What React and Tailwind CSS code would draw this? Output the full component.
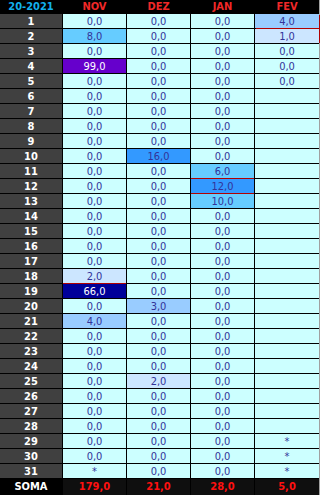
const font = { fontFamily: '"DejaVu Sans Condensed", "DejaVu Sans", Tahoma, sans-serif' };

// bg / text per highlighted cell, keyed "row-col"
const special = {
  "1-3": "bg-[#99ccff]",
  "2-0": "bg-[#66ccff]",
  "2-3": "bg-[#cce6ff]",
  "4-0": "bg-[#6600cc] text-white",
  "10-1": "bg-[#3399ff]",
  "11-2": "bg-[#66ccff]",
  "12-2": "bg-[#3399ff]",
  "13-2": "bg-[#66ccff]",
  "18-0": "bg-[#cce6ff]",
  "19-0": "bg-[#000099] text-white",
  "20-1": "bg-[#99ccff]",
  "21-0": "bg-[#99ccff]",
  "25-1": "bg-[#cce6ff]",
};

// red grid line under / beside some cells
const redLine = {
  "1-3": "shadow-[1px_1px_0_#b00000]",
  "2-3": "shadow-[1px_0_0_#b00000]",
  "11-2": "shadow-[0_1px_0_#b00000]",
  "12-2": "shadow-[0_1px_0_#b00000]",
  "18-0": "shadow-[0_1px_0_#b00000]",
};

const values = {
  "1-3": "4,0",
  "2-0": "8,0",
  "2-3": "1,0",
  "4-0": "99,0",
  "10-1": "16,0",
  "11-2": "6,0",
  "12-2": "12,0",
  "13-2": "10,0",
  "18-0": "2,0",
  "19-0": "66,0",
  "20-1": "3,0",
  "21-0": "4,0",
  "25-1": "2,0",
};

function cellText(r, c) {
  const k = `${r}-${c}`;
  if (values[k]) return values[k];
  if (c === 3) {
    if (r <= 5) return "0,0";
    if (r >= 29) return "*";
    return "";
  }
  if (r === 31 && c === 0) return "*";
  return "0,0";
}

export default function App() {
  const rows = Array.from({ length: 31 }, (_, i) => i + 1);
  const months = ["NOV", "DEZ", "JAN", "FEV"];
  const totals = ["179,0", "21,0", "28,0", "5,0"];

  return (
    <div
      className="w-[320px] grid grid-cols-[62px_63px_63px_63px_64px] grid-rows-[13px_repeat(31,14px)_16px] gap-px bg-black border-r border-[#a0a0a0] text-[11px]"
      style={font}
    >
      <div className="flex items-end justify-center font-bold text-[#12b0ec] leading-[12px]">20-2021</div>
      {months.map((m) => (
        <div key={m} className="flex items-end justify-center font-bold text-[#f02828] leading-[12px]">
          {m}
        </div>
      ))}

      {rows.map((r) => (
        <Row key={r} r={r} />
      ))}

      <div className="flex items-center justify-center font-bold text-white bg-black">SOMA</div>
      {totals.map((t, i) => (
        <div key={i} className="flex items-center justify-center font-bold text-[#ff1010] bg-[#0f0f0f]">
          {t}
        </div>
      ))}
    </div>
  );
}

function Row({ r }) {
  return (
    <>
      <div className="flex items-end justify-center bg-[#404040] text-white font-bold leading-[13px]">{r}</div>
      {[0, 1, 2, 3].map((c) => {
        const k = `${r}-${c}`;
        const look = special[k] || "bg-[#ccffff]";
        const color = look.includes("text-white") ? "" : "text-[#333399]";
        return (
          <div
            key={c}
            className={`flex items-end justify-center leading-[13px] ${look} ${color} ${redLine[k] || ""}`}
          >
            {cellText(r, c)}
          </div>
        );
      })}
    </>
  );
}
